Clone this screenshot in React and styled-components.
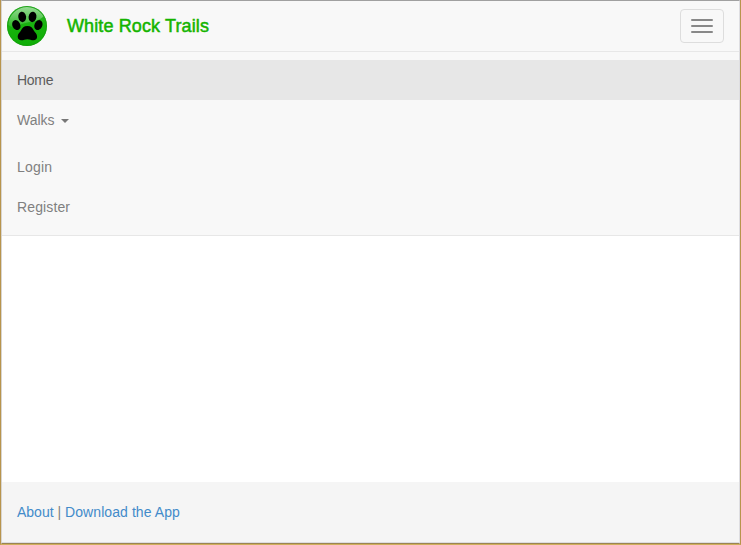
import React from 'react';
import styled, { createGlobalStyle } from 'styled-components';

const GlobalStyle = createGlobalStyle`
  * { box-sizing: border-box; }
  html, body { margin: 0; padding: 0; }
  body {
    font: 14px/20px "Liberation Sans", Arial, sans-serif;
    color: #808080;
    background: #fff;
    overflow: hidden;
  }
`;

const Frame = styled.div`
  display: flex;
  flex-direction: column;
  width: 741px;
  height: 545px;
  border-style: solid;
  border-width: 0 1px 1px;
  border-color: #b8944c #b8944c #d0ae5c;
  background: #fff;
`;

const Page = styled.div`
  flex: 1;
  display: flex;
  flex-direction: column;
  border-style: solid;
  border-width: 1px;
  border-color: #a0a0a0 #dedee2 #9b8451 #d8d5d0;
`;

const Navbar = styled.nav`
  height: 235px;
  background: #f8f8f8;
  border-bottom: 1px solid #e7e7e7;
`;

const Header = styled.header`
  display: flex;
  align-items: center;
  height: 51px;
  padding: 0 15px 0 5px;
  border-bottom: 1px solid #e7e7e7;
`;

const Logo = styled.svg`
  display: block;
  width: 40px;
  height: 40px;
`;

const Brand = styled.a`
  margin-left: 20px;
  font-size: 18px;
  line-height: 20px;
  color: #14b400;
  -webkit-text-stroke: 0.5px #14b400;
  letter-spacing: 0.12px;
`;

const Toggle = styled.button`
  display: flex;
  flex-direction: column;
  gap: 4px;
  width: 44px;
  height: 34px;
  margin: 0 0 0 auto;
  padding: 9px 10px;
  border: 1px solid #ddd;
  border-radius: 4px;
  background: transparent;
`;

const Bar = styled.span`
  width: 22px;
  height: 2px;
  border-radius: 1px;
  background: #888;
`;

const Menu = styled.ul`
  margin: 0;
  padding: ${(p) => p.$top} 0 0;
  list-style: none;
`;

const Item = styled.li`
  display: flex;
  align-items: center;
  height: 40px;
  padding: 0 15px;
  color: ${(p) => (p.$active ? '#5c5c5c' : '#808080')};
  background: ${(p) => (p.$active ? '#e7e7e7' : 'transparent')};
  letter-spacing: ${(p) => p.$spacing || '0'};
`;

const Caret = styled.span`
  margin: 2px 0 0 6px;
  border: 4px solid transparent;
  border-top-color: #777;
  border-bottom: 0;
`;

const Main = styled.main`
  flex: 1;
`;

const Footer = styled.footer`
  height: 61px;
  padding: 20px 15px;
  background: #f5f5f5;
  border-bottom: 1px solid #dcdce0;
  white-space: pre;
`;

const FooterLink = styled.a`
  color: #428bca;
  letter-spacing: ${(p) => p.$spacing || '0'};
`;

function PawLogo() {
  return (
    <Logo viewBox="0 0 40 40">
      <defs>
        <linearGradient id="ball" x1="0" y1="0" x2="0" y2="1">
          <stop offset="0" stopColor="#2fb52b" />
          <stop offset="0.5" stopColor="#17b30d" />
          <stop offset="1" stopColor="#0fae06" />
        </linearGradient>
        <linearGradient id="gloss" x1="0" y1="0" x2="0" y2="1">
          <stop offset="0" stopColor="#fff" stopOpacity="0.5" />
          <stop offset="1" stopColor="#fff" stopOpacity="0.08" />
        </linearGradient>
      </defs>
      <circle cx="20" cy="20" r="20" fill="url(#ball)" />
      <path d="M20 1C10 1 2 9 1.300 18.500C5 23.500 9 20 15 18C24 15 31 16 36.500 10.500C33 4.500 27 1 20 1Z" fill="url(#gloss)" />
      <circle cx="20" cy="20" r="19.500" fill="none" stroke="#15940f" strokeOpacity="0.5" />
      <ellipse cx="15.200" cy="10.900" rx="3.900" ry="5.300" transform="rotate(-10 15.200 10.900)" />
      <ellipse cx="25.500" cy="10.900" rx="3.900" ry="5.300" transform="rotate(10 25.500 10.900)" />
      <ellipse cx="9.300" cy="19.100" rx="3.900" ry="5.200" transform="rotate(-25 9.300 19.100)" />
      <ellipse cx="31.400" cy="19.100" rx="3.900" ry="5.200" transform="rotate(25 31.400 19.100)" />
      <path d="M20.400 20C16.800 20 15.200 22.100 14 24.400C12.800 26.500 10.700 27.600 10.700 30.600C10.700 33.200 12.400 34.400 14.500 34.300C16.700 34.200 17.900 33.200 20.400 33.200C22.900 33.200 24.100 34.200 26.300 34.300C28.400 34.400 30.100 33.200 30.100 30.600C30.100 27.600 28 26.500 26.800 24.400C25.600 22.100 24 20 20.400 20Z" />
    </Logo>
  );
}

export default function App() {
  return (
    <>
      <GlobalStyle />
      <Frame>
        <Page>
          <Navbar>
            <Header>
              <PawLogo />
              <Brand>White Rock Trails</Brand>
              <Toggle aria-label="Toggle navigation">
                <Bar />
                <Bar />
                <Bar />
              </Toggle>
            </Header>
            <Menu $top="8px">
              <Item $active $spacing="-0.3px">Home</Item>
              <Item>Walks<Caret /></Item>
            </Menu>
            <Menu $top="7px">
              <Item $spacing="0.2px">Login</Item>
              <Item $spacing="0.12px">Register</Item>
            </Menu>
          </Navbar>
          <Main />
          <Footer>
            <FooterLink>About</FooterLink> | <FooterLink $spacing="0.08px">Download the App</FooterLink>
          </Footer>
        </Page>
      </Frame>
    </>
  );
}
